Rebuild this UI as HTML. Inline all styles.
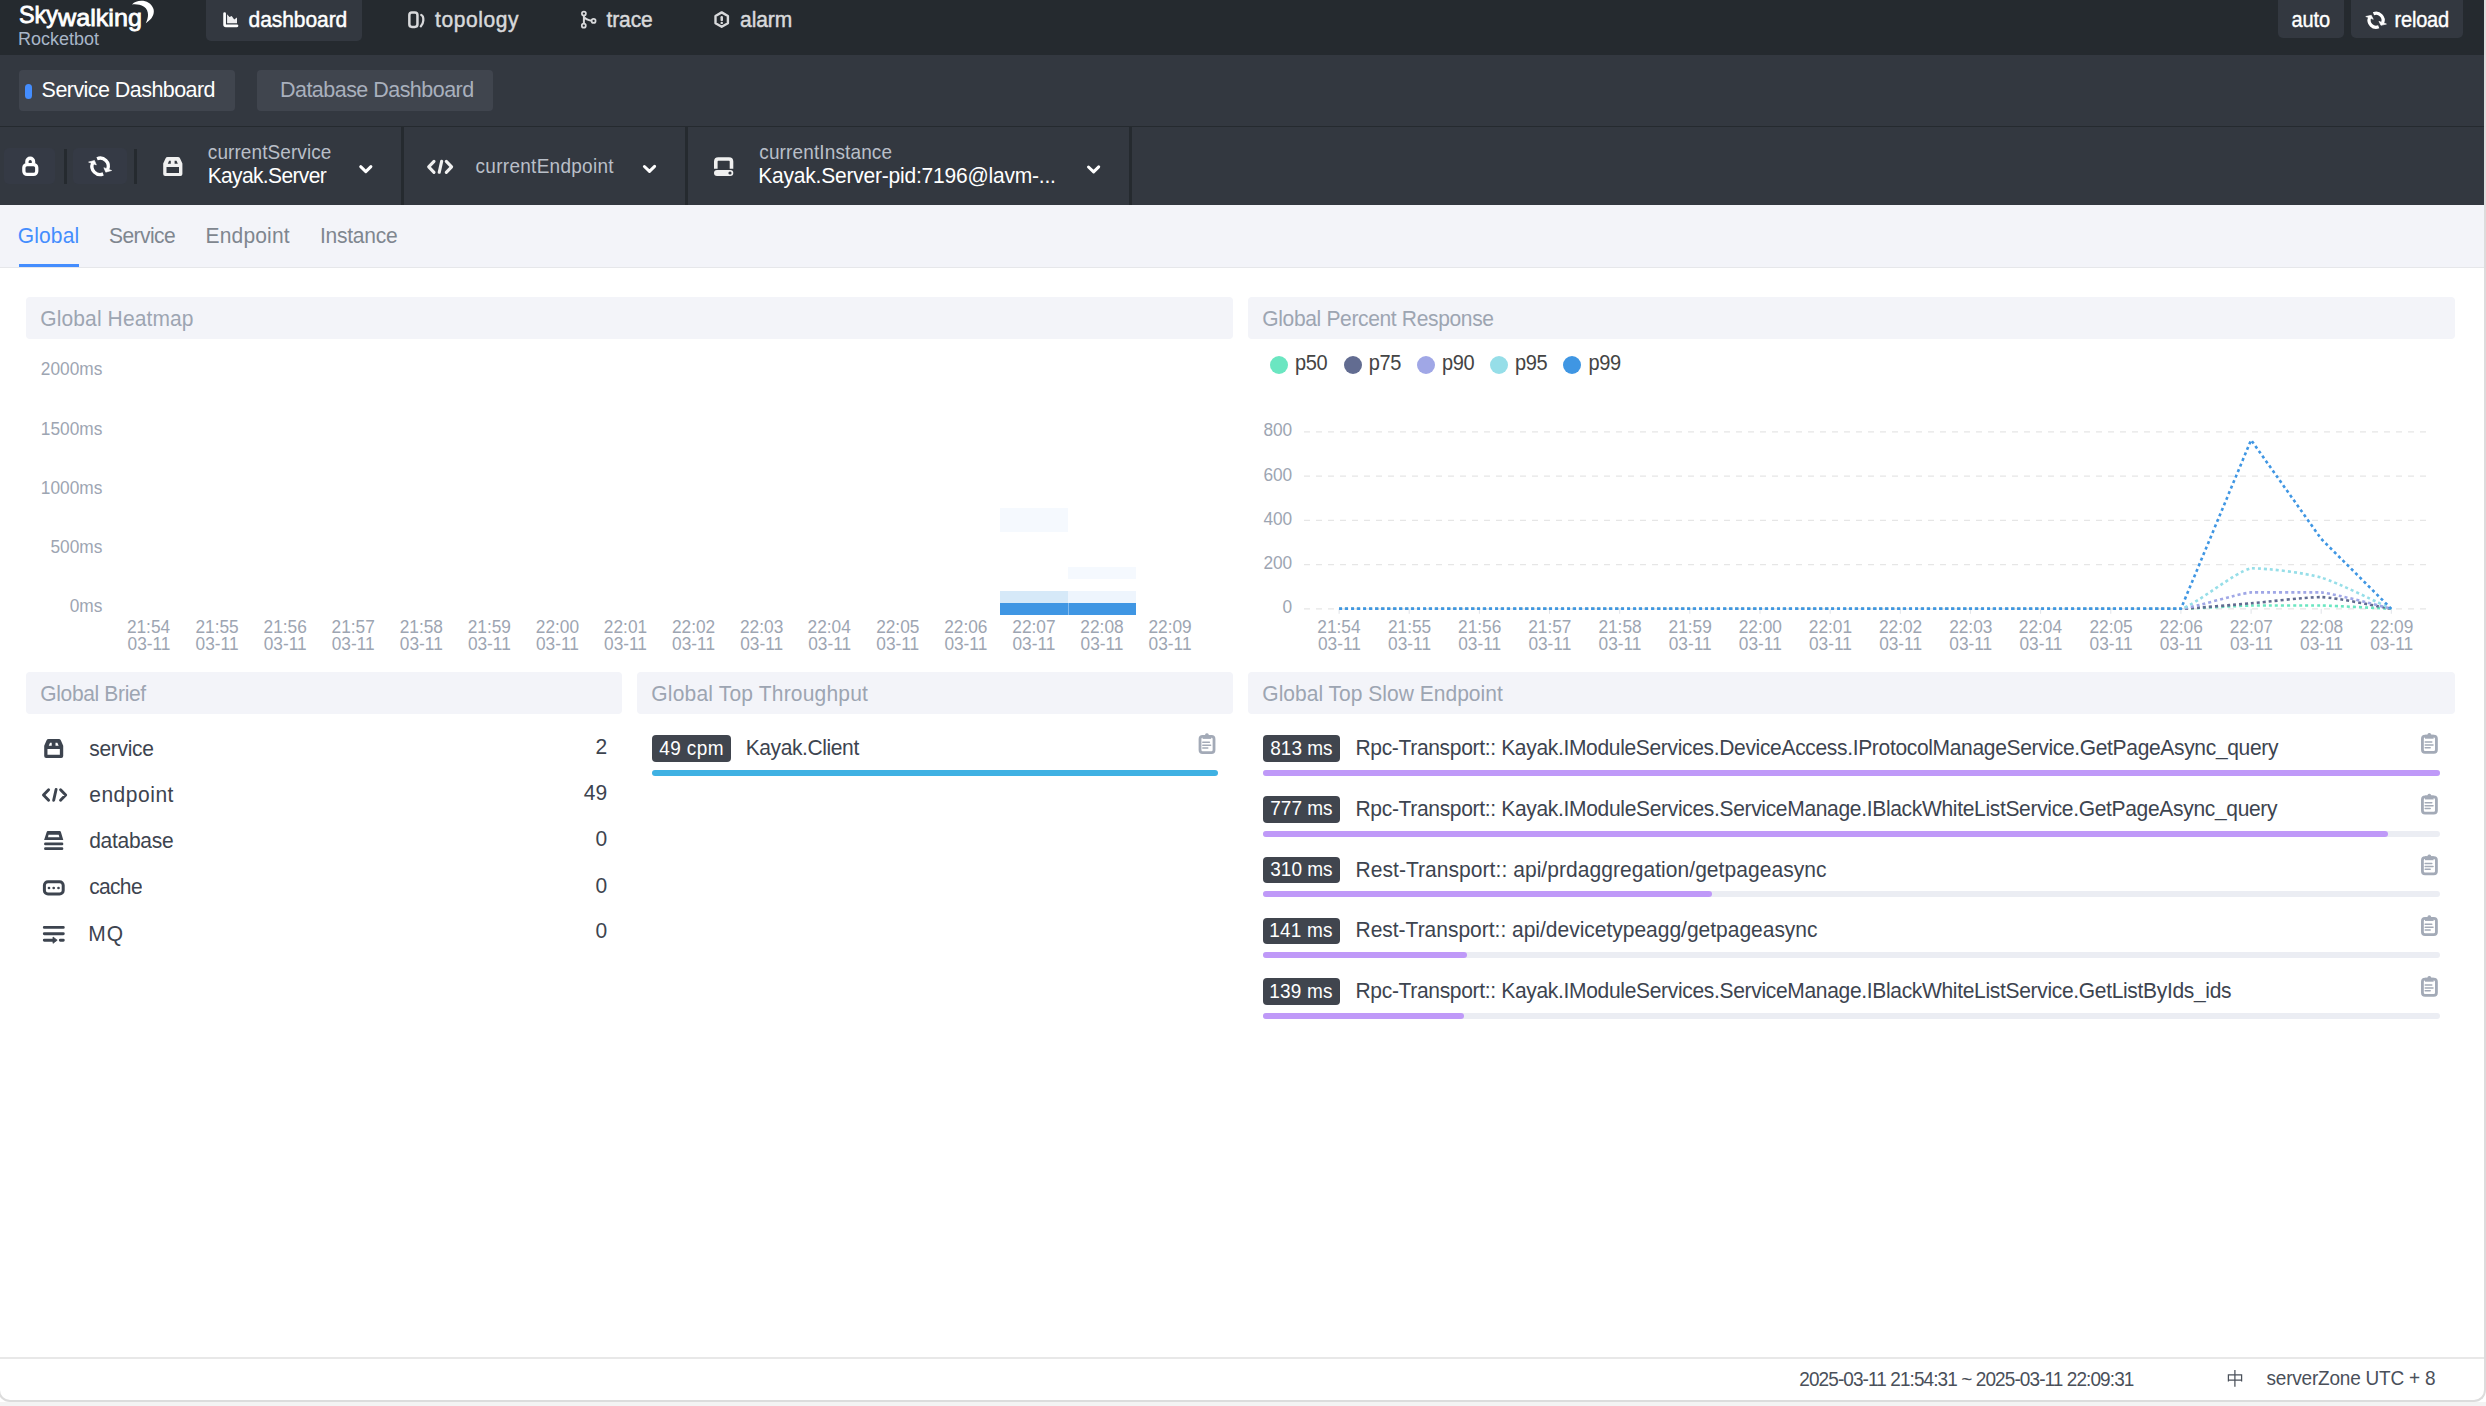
<!DOCTYPE html>
<html><head><meta charset="utf-8"><style>
html,body{margin:0;padding:0;width:2486px;height:1406px;overflow:hidden;background:#fff;font-family:"Liberation Sans", sans-serif;}
.t{position:absolute;white-space:nowrap;}
</style></head><body>
<div style="position:absolute;left:0px;top:0px;width:2486px;height:55px;background:#252a2f;"></div>
<div style="position:absolute;left:206px;top:-6px;width:156px;height:46.5px;background:#333840;border-radius:5px"></div>
<div style="position:absolute;left:2278px;top:-6px;width:66px;height:44px;background:#333840;border-radius:5px"></div>
<div style="position:absolute;left:2351px;top:-6px;width:112px;height:44px;background:#333840;border-radius:5px"></div>
<div style="position:absolute;left:0px;top:55px;width:2486px;height:71px;background:#333840;"></div>
<div style="position:absolute;left:19px;top:70px;width:215.5px;height:41px;background:#40454e;border-radius:4px"></div>
<div style="position:absolute;left:25px;top:84px;width:7px;height:15px;background:#448dfe;border-radius:4px"></div>
<div style="position:absolute;left:257px;top:70px;width:235.5px;height:41px;background:#40454e;border-radius:4px"></div>
<div style="position:absolute;left:0px;top:126px;width:2486px;height:1.5px;background:#252a2f;"></div>
<div style="position:absolute;left:0px;top:127px;width:2486px;height:78px;background:#333840;"></div>
<div style="position:absolute;left:3.7px;top:148.4px;width:51.2px;height:36.1px;background:#353a45;border-radius:5px"></div>
<div style="position:absolute;left:73.2px;top:148.4px;width:54.1px;height:36.1px;background:#353a45;border-radius:5px"></div>
<div style="position:absolute;left:64px;top:149px;width:3px;height:35px;background:#252a2f;"></div>
<div style="position:absolute;left:134px;top:149px;width:3px;height:35px;background:#252a2f;"></div>
<div style="position:absolute;left:401px;top:127px;width:3px;height:78px;background:#252a2f;"></div>
<div style="position:absolute;left:685px;top:127px;width:3px;height:78px;background:#252a2f;"></div>
<div style="position:absolute;left:1129px;top:127px;width:3px;height:78px;background:#252a2f;"></div>
<div style="position:absolute;left:0px;top:205px;width:2486px;height:62px;background:#f3f4f9;"></div>
<div style="position:absolute;left:0px;top:267px;width:2486px;height:1.3px;background:#e6e7ea;"></div>
<div style="position:absolute;left:18.5px;top:264px;width:60.5px;height:3px;background:#448dfe;"></div>
<div style="position:absolute;left:26px;top:297px;width:1207px;height:41.5px;background:#f3f4f9;border-radius:4px"></div>
<div style="position:absolute;left:1248px;top:297px;width:1207px;height:41.5px;background:#f3f4f9;border-radius:4px"></div>
<div style="position:absolute;left:26px;top:672px;width:596px;height:41.5px;background:#f3f4f9;border-radius:4px"></div>
<div style="position:absolute;left:637px;top:672px;width:596px;height:41.5px;background:#f3f4f9;border-radius:4px"></div>
<div style="position:absolute;left:1248px;top:672px;width:1207px;height:41.5px;background:#f3f4f9;border-radius:4px"></div>
<div style="position:absolute;left:999.58px;top:602.92px;width:68.07px;height:11.88px;background:#3f96e3;"></div>
<div style="position:absolute;left:1067.65px;top:602.92px;width:68.07px;height:11.88px;background:#3f96e3;"></div>
<div style="position:absolute;left:999.58px;top:591.04px;width:68.07px;height:11.88px;background:#d6e9f8;"></div>
<div style="position:absolute;left:1067.65px;top:591.04px;width:68.07px;height:11.88px;background:#eef5fd;"></div>
<div style="position:absolute;left:999.58px;top:507.88px;width:68.07px;height:23.76px;background:#f5f9fe;"></div>
<div style="position:absolute;left:1067.65px;top:567.28px;width:68.07px;height:11.88px;background:#f5f9fe;"></div>
<div style="position:absolute;left:1068px;top:603px;width:1px;height:11.8px;background:rgba(255,255,255,0.35);"></div>
<div style="position:absolute;left:1270px;top:356.3px;width:18px;height:18px;background:#6be6c1;border-radius:50%"></div>
<div style="position:absolute;left:1343.5px;top:356.3px;width:18px;height:18px;background:#626c91;border-radius:50%"></div>
<div style="position:absolute;left:1416.8px;top:356.3px;width:18px;height:18px;background:#a0a7e6;border-radius:50%"></div>
<div style="position:absolute;left:1490px;top:356.3px;width:18px;height:18px;background:#96dee8;border-radius:50%"></div>
<div style="position:absolute;left:1563px;top:356.3px;width:18px;height:18px;background:#3f96e3;border-radius:50%"></div>
<svg style="position:absolute;left:0;top:0" width="2486" height="1406" viewBox="0 0 2486 1406">
<line x1="1304" y1="431.8" x2="2427" y2="431.8" stroke="#e6e6e6" stroke-width="1.25" stroke-dasharray="6 6"/>
<line x1="1304" y1="476" x2="2427" y2="476" stroke="#e6e6e6" stroke-width="1.25" stroke-dasharray="6 6"/>
<line x1="1304" y1="520.3" x2="2427" y2="520.3" stroke="#e6e6e6" stroke-width="1.25" stroke-dasharray="6 6"/>
<line x1="1304" y1="564.5" x2="2427" y2="564.5" stroke="#e6e6e6" stroke-width="1.25" stroke-dasharray="6 6"/>
<line x1="1304" y1="608.8" x2="2427" y2="608.8" stroke="#e6e6e6" stroke-width="1.25" stroke-dasharray="6 6"/>
<line x1="1339.1" y1="608.8" x2="1339.1" y2="613.8" stroke="#e0e3e8" stroke-width="1"/>
<line x1="1409.2" y1="608.8" x2="1409.2" y2="613.8" stroke="#e0e3e8" stroke-width="1"/>
<line x1="1479.4" y1="608.8" x2="1479.4" y2="613.8" stroke="#e0e3e8" stroke-width="1"/>
<line x1="1549.5" y1="608.8" x2="1549.5" y2="613.8" stroke="#e0e3e8" stroke-width="1"/>
<line x1="1619.7" y1="608.8" x2="1619.7" y2="613.8" stroke="#e0e3e8" stroke-width="1"/>
<line x1="1689.8" y1="608.8" x2="1689.8" y2="613.8" stroke="#e0e3e8" stroke-width="1"/>
<line x1="1760.0" y1="608.8" x2="1760.0" y2="613.8" stroke="#e0e3e8" stroke-width="1"/>
<line x1="1830.2" y1="608.8" x2="1830.2" y2="613.8" stroke="#e0e3e8" stroke-width="1"/>
<line x1="1900.3" y1="608.8" x2="1900.3" y2="613.8" stroke="#e0e3e8" stroke-width="1"/>
<line x1="1970.4" y1="608.8" x2="1970.4" y2="613.8" stroke="#e0e3e8" stroke-width="1"/>
<line x1="2040.6" y1="608.8" x2="2040.6" y2="613.8" stroke="#e0e3e8" stroke-width="1"/>
<line x1="2110.8" y1="608.8" x2="2110.8" y2="613.8" stroke="#e0e3e8" stroke-width="1"/>
<line x1="2180.9" y1="608.8" x2="2180.9" y2="613.8" stroke="#e0e3e8" stroke-width="1"/>
<line x1="2251.1" y1="608.8" x2="2251.1" y2="613.8" stroke="#e0e3e8" stroke-width="1"/>
<line x1="2321.2" y1="608.8" x2="2321.2" y2="613.8" stroke="#e0e3e8" stroke-width="1"/>
<line x1="2391.3" y1="608.8" x2="2391.3" y2="613.8" stroke="#e0e3e8" stroke-width="1"/>
<path d="M1339.1 608.8 C1347.5 608.8 1392.4 608.8 1409.2 608.8 C1426.1 608.8 1462.6 608.8 1479.4 608.8 C1496.2 608.8 1532.7 608.8 1549.5 608.8 C1566.4 608.8 1602.9 608.8 1619.7 608.8 C1636.5 608.8 1673.0 608.8 1689.8 608.8 C1706.7 608.8 1743.2 608.8 1760.0 608.8 C1776.8 608.8 1813.3 608.8 1830.2 608.8 C1847.0 608.8 1883.5 608.8 1900.3 608.8 C1917.1 608.8 1953.6 608.8 1970.4 608.8 C1987.3 608.8 2023.8 608.8 2040.6 608.8 C2057.4 608.8 2093.9 608.8 2110.8 608.8 C2127.6 608.8 2164.1 608.8 2180.9 608.8 C2197.7 608.4 2234.2 605.9 2251.1 605.5 C2267.9 605.5 2304.4 605.5 2321.2 605.5 C2338.0 605.9 2382.9 608.4 2391.3 608.8" stroke="#6be6c1" stroke-width="2.6" fill="none" stroke-dasharray="3 3"/>
<path d="M1339.1 608.8 C1347.5 608.8 1392.4 608.8 1409.2 608.8 C1426.1 608.8 1462.6 608.8 1479.4 608.8 C1496.2 608.8 1532.7 608.8 1549.5 608.8 C1566.4 608.8 1602.9 608.8 1619.7 608.8 C1636.5 608.8 1673.0 608.8 1689.8 608.8 C1706.7 608.8 1743.2 608.8 1760.0 608.8 C1776.8 608.8 1813.3 608.8 1830.2 608.8 C1847.0 608.8 1883.5 608.8 1900.3 608.8 C1917.1 608.8 1953.6 608.8 1970.4 608.8 C1987.3 608.8 2023.8 608.8 2040.6 608.8 C2057.4 608.8 2093.9 608.8 2110.8 608.8 C2127.6 608.8 2164.1 608.8 2180.9 608.8 C2197.7 608.1 2234.2 604.7 2251.1 603.3 C2267.9 601.9 2304.4 597.1 2321.2 597.1 C2338.0 597.7 2382.9 607.4 2391.3 608.8" stroke="#626c91" stroke-width="2.6" fill="none" stroke-dasharray="3 3"/>
<path d="M1339.1 608.8 C1347.5 608.8 1392.4 608.8 1409.2 608.8 C1426.1 608.8 1462.6 608.8 1479.4 608.8 C1496.2 608.8 1532.7 608.8 1549.5 608.8 C1566.4 608.8 1602.9 608.8 1619.7 608.8 C1636.5 608.8 1673.0 608.8 1689.8 608.8 C1706.7 608.8 1743.2 608.8 1760.0 608.8 C1776.8 608.8 1813.3 608.8 1830.2 608.8 C1847.0 608.8 1883.5 608.8 1900.3 608.8 C1917.1 608.8 1953.6 608.8 1970.4 608.8 C1987.3 608.8 2023.8 608.8 2040.6 608.8 C2057.4 608.8 2093.9 608.8 2110.8 608.8 C2127.6 608.8 2164.1 608.8 2180.9 608.8 C2197.7 606.8 2234.2 594.4 2251.1 592.4 C2267.9 592.4 2304.4 592.4 2321.2 592.4 C2338.0 594.4 2382.9 606.8 2391.3 608.8" stroke="#a0a7e6" stroke-width="2.6" fill="none" stroke-dasharray="3 3"/>
<path d="M1339.1 608.8 C1347.5 608.8 1392.4 608.8 1409.2 608.8 C1426.1 608.8 1462.6 608.8 1479.4 608.8 C1496.2 608.8 1532.7 608.8 1549.5 608.8 C1566.4 608.8 1602.9 608.8 1619.7 608.8 C1636.5 608.8 1673.0 608.8 1689.8 608.8 C1706.7 608.8 1743.2 608.8 1760.0 608.8 C1776.8 608.8 1813.3 608.8 1830.2 608.8 C1847.0 608.8 1883.5 608.8 1900.3 608.8 C1917.1 608.8 1953.6 608.8 1970.4 608.8 C1987.3 608.8 2023.8 608.8 2040.6 608.8 C2057.4 608.8 2093.9 608.8 2110.8 608.8 C2127.6 608.8 2164.1 608.8 2180.9 608.8 C2197.7 603.9 2234.2 572.1 2251.1 568.3 C2267.9 568.3 2304.4 572.7 2321.2 577.6 C2338.0 582.5 2382.9 605.1 2391.3 608.8" stroke="#96dee8" stroke-width="2.6" fill="none" stroke-dasharray="3 3"/>
<path d="M1339.1 608.8 L1409.2 608.8 L1479.4 608.8 L1549.5 608.8 L1619.7 608.8 L1689.8 608.8 L1760.0 608.8 L1830.2 608.8 L1900.3 608.8 L1970.4 608.8 L2040.6 608.8 L2110.8 608.8 L2180.9 608.8 L2251.1 440.0 L2321.2 538.9 L2391.3 608.8" stroke="#3f96e3" stroke-width="2.6" fill="none" stroke-dasharray="3 3"/>
</svg>
<div style="position:absolute;left:652px;top:735.3px;width:79px;height:26.5px;background:#40454e;border-radius:4px"></div>
<div style="position:absolute;left:652px;top:770px;width:566px;height:6px;background:#3fb1e3;border-radius:3px"></div>
<div style="position:absolute;left:1263px;top:735.3px;width:77px;height:26.5px;background:#40454e;border-radius:4px"></div>
<div style="position:absolute;left:1263px;top:769.9px;width:1177px;height:6px;background:#ebedf3;border-radius:3px"></div>
<div style="position:absolute;left:1263px;top:769.9px;width:1177px;height:6px;background:#bf99f8;border-radius:3px"></div>
<div style="position:absolute;left:1263px;top:796.05px;width:77px;height:26.5px;background:#40454e;border-radius:4px"></div>
<div style="position:absolute;left:1263px;top:830.65px;width:1177px;height:6px;background:#ebedf3;border-radius:3px"></div>
<div style="position:absolute;left:1263px;top:830.65px;width:1125px;height:6px;background:#bf99f8;border-radius:3px"></div>
<div style="position:absolute;left:1263px;top:856.8px;width:77px;height:26.5px;background:#40454e;border-radius:4px"></div>
<div style="position:absolute;left:1263px;top:891.4px;width:1177px;height:6px;background:#ebedf3;border-radius:3px"></div>
<div style="position:absolute;left:1263px;top:891.4px;width:448.70000000000005px;height:6px;background:#bf99f8;border-radius:3px"></div>
<div style="position:absolute;left:1263px;top:917.55px;width:77px;height:26.5px;background:#40454e;border-radius:4px"></div>
<div style="position:absolute;left:1263px;top:952.15px;width:1177px;height:6px;background:#ebedf3;border-radius:3px"></div>
<div style="position:absolute;left:1263px;top:952.15px;width:203.5999999999999px;height:6px;background:#bf99f8;border-radius:3px"></div>
<div style="position:absolute;left:1263px;top:978.3px;width:77px;height:26.5px;background:#40454e;border-radius:4px"></div>
<div style="position:absolute;left:1263px;top:1012.9px;width:1177px;height:6px;background:#ebedf3;border-radius:3px"></div>
<div style="position:absolute;left:1263px;top:1012.9px;width:201px;height:6px;background:#bf99f8;border-radius:3px"></div>
<div style="position:absolute;left:0px;top:1357px;width:2486px;height:1.6px;background:#e8e8e8;"></div>
<div style="position:absolute;left:-2px;top:1000px;width:2488px;height:402px;border:2px solid #dcdcdc;border-top:none;border-radius:0 0 12px 12px;box-sizing:border-box"></div>
<div style="position:absolute;left:0px;top:1402px;width:2486px;height:4px;background:#f3f3f3;"></div>
<div style="position:absolute;left:2484px;top:0px;width:2px;height:1000px;background:#dcdcdc;"></div>
<svg style="position:absolute;left:0;top:0" width="2486" height="1406" viewBox="0 0 2486 1406">
<path d="M224.6 13.5 V24.5 Q224.6 25.8 225.9 25.8 H237" stroke="#fff" stroke-width="2.7" fill="none" stroke-linecap="round"/>
<path d="M227.1 14.3 L229.5 16.9 L231.7 16 L234.2 19.5 L237 17.6 V23.2 H227.1 Z" fill="#eeeef0"/>
<rect x="409.35" y="12.45" width="8.1" height="14.5" rx="2.6" stroke="#d8d9db" stroke-width="2.5" fill="none"/>
<path d="M421.3 15 Q423.6 16 423.3 20.5 Q423 24.5 420.8 26.3" stroke="#d8d9db" stroke-width="2.3" fill="none" stroke-linecap="round"/>
<path d="M583.9 15.6 V23.7 M584.6 17.6 Q586 19.6 591.6 20.7" stroke="#d8d9db" stroke-width="2" fill="none"/>
<circle cx="583.9" cy="13.6" r="2" stroke="#d8d9db" stroke-width="1.7" fill="none"/>
<circle cx="583.8" cy="25.7" r="2" stroke="#d8d9db" stroke-width="1.7" fill="none"/>
<circle cx="593.6" cy="20.9" r="2" stroke="#d8d9db" stroke-width="1.7" fill="none"/>
<path d="M721.7 12.4 L727.9 16 V23.2 L721.7 26.8 L715.5 23.2 V16 Z" stroke="#d8d9db" stroke-width="2.4" fill="none" stroke-linejoin="round"/>
<rect x="720.5" y="16" width="2.5" height="5.3" rx="1.2" fill="#d8d9db"/>
<rect x="720.5" y="22" width="2.5" height="1.9" rx="0.7" fill="#d8d9db"/>
<path d="M2373.48 13.81 A7.00 7.00 0 0 1 2382.59 22.92" stroke="#fff" stroke-width="3.2" fill="none"/>
<path d="M2378.92 21.33 L2386.44 24.06 L2380.96 25.34 Z" fill="#fff" stroke="#fff" stroke-width="0.6" stroke-linejoin="round"/>
<path d="M2378.72 26.79 A7.00 7.00 0 0 1 2369.61 17.68" stroke="#fff" stroke-width="3.2" fill="none"/>
<path d="M2373.28 19.27 L2365.76 16.54 L2371.24 15.26 Z" fill="#fff" stroke="#fff" stroke-width="0.6" stroke-linejoin="round"/>
<path d="M26.9 163.5 V161.5 A3.3 3.3 0 0 1 33.5 161.5 V163.5" stroke="#fff" stroke-width="3.4" fill="none"/>
<rect x="23.85" y="164.55" width="12.9" height="9.9" rx="3.2" stroke="#fff" stroke-width="3.3" fill="none"/>
<path d="M97.05 158.74 A8.15 8.15 0 0 1 107.66 169.35" stroke="#fff" stroke-width="3.3" fill="none"/>
<path d="M103.88 167.68 L111.63 170.50 L105.76 172.16 Z" fill="#fff" stroke="#fff" stroke-width="0.6" stroke-linejoin="round"/>
<path d="M103.15 173.86 A8.15 8.15 0 0 1 92.54 163.25" stroke="#fff" stroke-width="3.3" fill="none"/>
<path d="M96.32 164.92 L88.57 162.10 L94.44 160.44 Z" fill="#fff" stroke="#fff" stroke-width="0.6" stroke-linejoin="round"/>
<path d="M167.80 157.00 L177.80 157.00 Q179.50 157.00 180.10 158.40 L182.40 163.60 L182.40 174.10 Q182.40 176.10 180.40 176.10 L165.20 176.10 Q163.20 176.10 163.20 174.10 L163.20 163.60 L165.50 158.40 Q166.10 157.00 167.80 157.00 Z M166.50 167.00 L179.00 167.00 L179.00 172.90 L166.50 172.90 Z M167.80 163.70 L169.10 160.70 L170.80 160.70 L170.80 163.70 Z M174.60 160.70 L176.50 160.70 L177.80 163.70 L174.60 163.70 Z" fill="#f0f0f0" fill-rule="evenodd"/>
<path d="M434.00 161.40 L428.70 166.85 L434.00 172.30 M446.30 161.40 L451.60 166.85 L446.30 172.30 M441.70 161.20 L439.20 172.30" stroke="#f0f0f0" stroke-width="3.1" fill="none" stroke-linecap="round" stroke-linejoin="round"/>
<path d="M715.8 168.8 V161.5 Q715.8 159 718.3 159 H729 Q731.5 159 731.5 161.5 V168.8" stroke="#f0f0f0" stroke-width="3.6" fill="none"/>
<rect x="714" y="170" width="19.3" height="6.1" rx="3" fill="#f0f0f0"/>
<circle cx="730" cy="173" r="1.6" fill="#333840"/>
<path d="M360.70 166.70 L365.80 171.60 L370.90 166.60" stroke="#fff" stroke-width="3" fill="none" stroke-linecap="round" stroke-linejoin="round"/>
<path d="M644.40 166.50 L649.50 171.40 L654.60 166.40" stroke="#fff" stroke-width="3" fill="none" stroke-linecap="round" stroke-linejoin="round"/>
<path d="M1088.50 167.00 L1093.60 171.90 L1098.70 166.90" stroke="#fff" stroke-width="3" fill="none" stroke-linecap="round" stroke-linejoin="round"/>
<path d="M48.75 739.10 L58.65 739.10 Q60.34 739.10 60.93 740.49 L63.21 745.63 L63.21 756.03 Q63.21 758.01 61.23 758.01 L46.18 758.01 Q44.20 758.01 44.20 756.03 L44.20 745.63 L46.48 740.49 Q47.07 739.10 48.75 739.10 Z M47.47 749.00 L59.84 749.00 L59.84 754.84 L47.47 754.84 Z M48.75 745.73 L50.04 742.76 L51.72 742.76 L51.72 745.73 Z M55.49 742.76 L57.37 742.76 L58.65 745.73 L55.49 745.73 Z" fill="#3d444f" fill-rule="evenodd"/>
<path d="M48.61 789.70 L43.47 794.99 L48.61 800.27 M60.55 789.70 L65.69 794.99 L60.55 800.27 M56.08 789.51 L53.66 800.27" stroke="#3d444f" stroke-width="2.9" fill="none" stroke-linecap="round" stroke-linejoin="round"/>
<path d="M47.8 831.1 H59.8 Q60.6 831.1 60.9 832 L63.3 839.9 H44.1 L46.7 832 Q47 831.1 47.8 831.1 Z M48.5 834.8 L48 837.3 H59.4 L58.7 834.8 Z" fill="#3d444f" fill-rule="evenodd"/>
<path d="M45.4 843.9 H62 M45.4 848.7 H62" stroke="#3d444f" stroke-width="2.7" stroke-linecap="round"/>
<rect x="44.4" y="881.7" width="18.8" height="12.3" rx="3.6" stroke="#3d444f" stroke-width="3" fill="none"/>
<circle cx="49" cy="888" r="1.35" fill="#3d444f"/>
<circle cx="53.7" cy="888" r="1.35" fill="#3d444f"/>
<circle cx="58.5" cy="888" r="1.35" fill="#3d444f"/>
<path d="M44.3 927.4 H63.3 M44.3 933.7 H63.3 M44.3 940.2 H53.5 M60.3 940.2 H63.3" stroke="#3d444f" stroke-width="2.9" stroke-linecap="round"/>
<path d="M53 937 L57.2 940.2 L53 943.3 Z" fill="#3d444f" stroke="#3d444f" stroke-width="0.8" stroke-linejoin="round"/>
<path d="M132 4.5 C137 -1 150 -1 153.5 9 C155 15 151 20 145.8 23.2 C149 17 149 10 144 6.8 C140 4.5 136 4 132 4.5 Z" fill="#fff"/>
<rect x="1200.02" y="736.40" width="14" height="16.2" rx="2.6" stroke="#a3aab7" stroke-width="2.8" fill="none"/><path d="M1202.60 735.00 H1211.20 V738.90 H1202.60 Z" fill="#a3aab7"/><rect x="1205.10" y="733.20" width="3.6" height="3" rx="1.5" fill="#a3aab7"/><path d="M1202.80 742.30 H1209.40 M1202.80 745.20 H1210.60 M1202.80 747.90 H1207.80" stroke="#a3aab7" stroke-width="1.5" stroke-linecap="round"/>
<rect x="2422.42" y="736.20" width="14" height="16.2" rx="2.6" stroke="#a3aab7" stroke-width="2.8" fill="none"/><path d="M2425.00 734.80 H2433.60 V738.70 H2425.00 Z" fill="#a3aab7"/><rect x="2427.50" y="733.00" width="3.6" height="3" rx="1.5" fill="#a3aab7"/><path d="M2425.20 742.10 H2431.80 M2425.20 745.00 H2433.00 M2425.20 747.70 H2430.20" stroke="#a3aab7" stroke-width="1.5" stroke-linecap="round"/>
<rect x="2422.42" y="796.95" width="14" height="16.2" rx="2.6" stroke="#a3aab7" stroke-width="2.8" fill="none"/><path d="M2425.00 795.55 H2433.60 V799.45 H2425.00 Z" fill="#a3aab7"/><rect x="2427.50" y="793.75" width="3.6" height="3" rx="1.5" fill="#a3aab7"/><path d="M2425.20 802.85 H2431.80 M2425.20 805.75 H2433.00 M2425.20 808.45 H2430.20" stroke="#a3aab7" stroke-width="1.5" stroke-linecap="round"/>
<rect x="2422.42" y="857.70" width="14" height="16.2" rx="2.6" stroke="#a3aab7" stroke-width="2.8" fill="none"/><path d="M2425.00 856.30 H2433.60 V860.20 H2425.00 Z" fill="#a3aab7"/><rect x="2427.50" y="854.50" width="3.6" height="3" rx="1.5" fill="#a3aab7"/><path d="M2425.20 863.60 H2431.80 M2425.20 866.50 H2433.00 M2425.20 869.20 H2430.20" stroke="#a3aab7" stroke-width="1.5" stroke-linecap="round"/>
<rect x="2422.42" y="918.45" width="14" height="16.2" rx="2.6" stroke="#a3aab7" stroke-width="2.8" fill="none"/><path d="M2425.00 917.05 H2433.60 V920.95 H2425.00 Z" fill="#a3aab7"/><rect x="2427.50" y="915.25" width="3.6" height="3" rx="1.5" fill="#a3aab7"/><path d="M2425.20 924.35 H2431.80 M2425.20 927.25 H2433.00 M2425.20 929.95 H2430.20" stroke="#a3aab7" stroke-width="1.5" stroke-linecap="round"/>
<rect x="2422.42" y="979.20" width="14" height="16.2" rx="2.6" stroke="#a3aab7" stroke-width="2.8" fill="none"/><path d="M2425.00 977.80 H2433.60 V981.70 H2425.00 Z" fill="#a3aab7"/><rect x="2427.50" y="976.00" width="3.6" height="3" rx="1.5" fill="#a3aab7"/><path d="M2425.20 985.10 H2431.80 M2425.20 988.00 H2433.00 M2425.20 990.70 H2430.20" stroke="#a3aab7" stroke-width="1.5" stroke-linecap="round"/>
<path d="M2228.4 1381.6 V1374.8 H2241.6 V1381.6 M2228.4 1380.2 H2241.6 M2234.9 1370 V1386.7" stroke="#4a505a" stroke-width="1.25" fill="none"/>
</svg>
<div class="t" style="left:18.53px;top:3.20px;font-size:24px;line-height:24px;color:#ffffff;transform:scale(0.9742,1.0000);transform-origin:0 20.40px;-webkit-text-stroke:0.8px #fff;">Sky</div>
<div class="t" style="left:57.55px;top:6.00px;font-size:24px;line-height:24px;color:#ffffff;transform:scale(1.0478,1.0000);transform-origin:0 20.40px;-webkit-text-stroke:0.8px #fff;">walking</div>
<div class="t" style="left:18.00px;top:29.70px;font-size:18px;line-height:18px;color:#a8b6c8;letter-spacing:-0.005px;transform:scale(1.0000,1.0600);transform-origin:0 15.30px;">Rocketbot</div>
<div class="t" style="left:248.60px;top:9.15px;font-size:21px;line-height:21px;color:#ffffff;letter-spacing:-0.071px;transform:scale(1.0000,1.0600);transform-origin:0 17.85px;-webkit-text-stroke:0.45px #fff;">dashboard</div>
<div class="t" style="left:435.00px;top:9.15px;font-size:21px;line-height:21px;color:#d8d9db;letter-spacing:0.586px;transform:scale(1.0000,1.0600);transform-origin:0 17.85px;-webkit-text-stroke:0.45px #d8d9db;">topology</div>
<div class="t" style="left:606.60px;top:9.15px;font-size:21px;line-height:21px;color:#d8d9db;letter-spacing:-0.152px;transform:scale(1.0000,1.0600);transform-origin:0 17.85px;-webkit-text-stroke:0.45px #d8d9db;">trace</div>
<div class="t" style="left:740.00px;top:9.15px;font-size:21px;line-height:21px;color:#d8d9db;letter-spacing:-0.054px;transform:scale(1.0000,1.0600);transform-origin:0 17.85px;-webkit-text-stroke:0.45px #d8d9db;">alarm</div>
<div class="t" style="left:2291.50px;top:10.00px;font-size:20px;line-height:20px;color:#ffffff;letter-spacing:-0.101px;transform:scale(1.0000,1.0600);transform-origin:0 17.00px;-webkit-text-stroke:0.35px #fff;">auto</div>
<div class="t" style="left:2394.60px;top:10.00px;font-size:20px;line-height:20px;color:#ffffff;letter-spacing:-0.215px;transform:scale(1.0000,1.0600);transform-origin:0 17.00px;-webkit-text-stroke:0.35px #fff;">reload</div>
<div class="t" style="left:41.60px;top:79.72px;font-size:21.5px;line-height:21.5px;color:#ffffff;letter-spacing:-0.555px;transform:scale(1.0000,1.0600);transform-origin:0 18.27px;">Service Dashboard</div>
<div class="t" style="left:280.00px;top:79.72px;font-size:21.5px;line-height:21.5px;color:#a9b0bd;letter-spacing:-0.531px;transform:scale(1.0000,1.0600);transform-origin:0 18.27px;">Database Dashboard</div>
<div class="t" style="left:207.80px;top:142.65px;font-size:19px;line-height:19px;color:#b9bfc8;letter-spacing:0.083px;transform:scale(1.0000,1.0600);transform-origin:0 16.15px;">currentService</div>
<div class="t" style="left:207.70px;top:165.15px;font-size:21px;line-height:21px;color:#ffffff;letter-spacing:-0.642px;transform:scale(1.0000,1.0600);transform-origin:0 17.85px;">Kayak.Server</div>
<div class="t" style="left:475.60px;top:156.85px;font-size:19px;line-height:19px;color:#b9bfc8;letter-spacing:0.274px;transform:scale(1.0000,1.0600);transform-origin:0 16.15px;">currentEndpoint</div>
<div class="t" style="left:759.30px;top:143.05px;font-size:19px;line-height:19px;color:#b9bfc8;letter-spacing:0.129px;transform:scale(1.0000,1.0600);transform-origin:0 16.15px;">currentInstance</div>
<div class="t" style="left:758.30px;top:164.95px;font-size:21px;line-height:21px;color:#ffffff;letter-spacing:-0.215px;transform:scale(1.0000,1.0600);transform-origin:0 17.85px;">Kayak.Server-pid:7196@lavm-...</div>
<div class="t" style="left:17.70px;top:225.15px;font-size:21px;line-height:21px;color:#448dfe;letter-spacing:0.152px;transform:scale(1.0000,1.0600);transform-origin:0 17.85px;">Global</div>
<div class="t" style="left:109.00px;top:225.15px;font-size:21px;line-height:21px;color:#7f868f;letter-spacing:-0.557px;transform:scale(1.0000,1.0600);transform-origin:0 17.85px;">Service</div>
<div class="t" style="left:205.50px;top:225.15px;font-size:21px;line-height:21px;color:#7f868f;letter-spacing:0.176px;transform:scale(1.0000,1.0600);transform-origin:0 17.85px;">Endpoint</div>
<div class="t" style="left:320.00px;top:225.15px;font-size:21px;line-height:21px;color:#7f868f;letter-spacing:-0.244px;transform:scale(1.0000,1.0600);transform-origin:0 17.85px;">Instance</div>
<div class="t" style="left:40.30px;top:308.15px;font-size:21px;line-height:21px;color:#9da5b2;letter-spacing:0.110px;transform:scale(1.0000,1.0600);transform-origin:0 17.85px;">Global Heatmap</div>
<div class="t" style="left:1262.30px;top:308.15px;font-size:21px;line-height:21px;color:#9da5b2;letter-spacing:-0.347px;transform:scale(1.0000,1.0600);transform-origin:0 17.85px;">Global Percent Response</div>
<div class="t" style="left:40.30px;top:683.15px;font-size:21px;line-height:21px;color:#9da5b2;letter-spacing:-0.353px;transform:scale(1.0000,1.0600);transform-origin:0 17.85px;">Global Brief</div>
<div class="t" style="left:651.30px;top:683.15px;font-size:21px;line-height:21px;color:#9da5b2;letter-spacing:0.185px;transform:scale(1.0000,1.0600);transform-origin:0 17.85px;">Global Top Throughput</div>
<div class="t" style="left:1262.30px;top:683.15px;font-size:21px;line-height:21px;color:#9da5b2;letter-spacing:0.015px;transform:scale(1.0000,1.0600);transform-origin:0 17.85px;">Global Top Slow Endpoint</div>
<div class="t" style="left:40.86px;top:361.30px;font-size:17.3px;line-height:17.3px;color:#9da5b2;transform:scale(1.0000,1.0600);transform-origin:0 14.71px;">2000ms</div>
<div class="t" style="left:40.86px;top:420.55px;font-size:17.3px;line-height:17.3px;color:#9da5b2;transform:scale(1.0000,1.0600);transform-origin:0 14.71px;">1500ms</div>
<div class="t" style="left:40.86px;top:479.80px;font-size:17.3px;line-height:17.3px;color:#9da5b2;transform:scale(1.0000,1.0600);transform-origin:0 14.71px;">1000ms</div>
<div class="t" style="left:50.47px;top:539.04px;font-size:17.3px;line-height:17.3px;color:#9da5b2;transform:scale(1.0000,1.0600);transform-origin:0 14.71px;">500ms</div>
<div class="t" style="left:69.69px;top:598.29px;font-size:17.3px;line-height:17.3px;color:#9da5b2;transform:scale(1.0000,1.0600);transform-origin:0 14.71px;">0ms</div>
<div class="t" style="left:126.88px;top:618.69px;font-size:17.3px;line-height:17.3px;color:#9da5b2;transform:scale(1.0000,1.0600);transform-origin:0 14.71px;">21:54</div>
<div class="t" style="left:127.55px;top:635.59px;font-size:17.3px;line-height:17.3px;color:#9da5b2;transform:scale(1.0000,1.0600);transform-origin:0 14.71px;">03-11</div>
<div class="t" style="left:195.45px;top:618.69px;font-size:17.3px;line-height:17.3px;color:#9da5b2;transform:scale(1.0000,1.0600);transform-origin:0 14.71px;">21:55</div>
<div class="t" style="left:195.62px;top:635.59px;font-size:17.3px;line-height:17.3px;color:#9da5b2;transform:scale(1.0000,1.0600);transform-origin:0 14.71px;">03-11</div>
<div class="t" style="left:263.52px;top:618.69px;font-size:17.3px;line-height:17.3px;color:#9da5b2;transform:scale(1.0000,1.0600);transform-origin:0 14.71px;">21:56</div>
<div class="t" style="left:263.69px;top:635.59px;font-size:17.3px;line-height:17.3px;color:#9da5b2;transform:scale(1.0000,1.0600);transform-origin:0 14.71px;">03-11</div>
<div class="t" style="left:331.59px;top:618.69px;font-size:17.3px;line-height:17.3px;color:#9da5b2;transform:scale(1.0000,1.0600);transform-origin:0 14.71px;">21:57</div>
<div class="t" style="left:331.76px;top:635.59px;font-size:17.3px;line-height:17.3px;color:#9da5b2;transform:scale(1.0000,1.0600);transform-origin:0 14.71px;">03-11</div>
<div class="t" style="left:399.66px;top:618.69px;font-size:17.3px;line-height:17.3px;color:#9da5b2;transform:scale(1.0000,1.0600);transform-origin:0 14.71px;">21:58</div>
<div class="t" style="left:399.83px;top:635.59px;font-size:17.3px;line-height:17.3px;color:#9da5b2;transform:scale(1.0000,1.0600);transform-origin:0 14.71px;">03-11</div>
<div class="t" style="left:467.73px;top:618.69px;font-size:17.3px;line-height:17.3px;color:#9da5b2;transform:scale(1.0000,1.0600);transform-origin:0 14.71px;">21:59</div>
<div class="t" style="left:467.90px;top:635.59px;font-size:17.3px;line-height:17.3px;color:#9da5b2;transform:scale(1.0000,1.0600);transform-origin:0 14.71px;">03-11</div>
<div class="t" style="left:535.80px;top:618.69px;font-size:17.3px;line-height:17.3px;color:#9da5b2;transform:scale(1.0000,1.0600);transform-origin:0 14.71px;">22:00</div>
<div class="t" style="left:535.97px;top:635.59px;font-size:17.3px;line-height:17.3px;color:#9da5b2;transform:scale(1.0000,1.0600);transform-origin:0 14.71px;">03-11</div>
<div class="t" style="left:603.87px;top:618.69px;font-size:17.3px;line-height:17.3px;color:#9da5b2;transform:scale(1.0000,1.0600);transform-origin:0 14.71px;">22:01</div>
<div class="t" style="left:604.04px;top:635.59px;font-size:17.3px;line-height:17.3px;color:#9da5b2;transform:scale(1.0000,1.0600);transform-origin:0 14.71px;">03-11</div>
<div class="t" style="left:671.94px;top:618.69px;font-size:17.3px;line-height:17.3px;color:#9da5b2;transform:scale(1.0000,1.0600);transform-origin:0 14.71px;">22:02</div>
<div class="t" style="left:672.11px;top:635.59px;font-size:17.3px;line-height:17.3px;color:#9da5b2;transform:scale(1.0000,1.0600);transform-origin:0 14.71px;">03-11</div>
<div class="t" style="left:740.01px;top:618.69px;font-size:17.3px;line-height:17.3px;color:#9da5b2;transform:scale(1.0000,1.0600);transform-origin:0 14.71px;">22:03</div>
<div class="t" style="left:740.18px;top:635.59px;font-size:17.3px;line-height:17.3px;color:#9da5b2;transform:scale(1.0000,1.0600);transform-origin:0 14.71px;">03-11</div>
<div class="t" style="left:807.58px;top:618.69px;font-size:17.3px;line-height:17.3px;color:#9da5b2;transform:scale(1.0000,1.0600);transform-origin:0 14.71px;">22:04</div>
<div class="t" style="left:808.25px;top:635.59px;font-size:17.3px;line-height:17.3px;color:#9da5b2;transform:scale(1.0000,1.0600);transform-origin:0 14.71px;">03-11</div>
<div class="t" style="left:876.15px;top:618.69px;font-size:17.3px;line-height:17.3px;color:#9da5b2;transform:scale(1.0000,1.0600);transform-origin:0 14.71px;">22:05</div>
<div class="t" style="left:876.32px;top:635.59px;font-size:17.3px;line-height:17.3px;color:#9da5b2;transform:scale(1.0000,1.0600);transform-origin:0 14.71px;">03-11</div>
<div class="t" style="left:944.22px;top:618.69px;font-size:17.3px;line-height:17.3px;color:#9da5b2;transform:scale(1.0000,1.0600);transform-origin:0 14.71px;">22:06</div>
<div class="t" style="left:944.39px;top:635.59px;font-size:17.3px;line-height:17.3px;color:#9da5b2;transform:scale(1.0000,1.0600);transform-origin:0 14.71px;">03-11</div>
<div class="t" style="left:1012.29px;top:618.69px;font-size:17.3px;line-height:17.3px;color:#9da5b2;transform:scale(1.0000,1.0600);transform-origin:0 14.71px;">22:07</div>
<div class="t" style="left:1012.46px;top:635.59px;font-size:17.3px;line-height:17.3px;color:#9da5b2;transform:scale(1.0000,1.0600);transform-origin:0 14.71px;">03-11</div>
<div class="t" style="left:1080.36px;top:618.69px;font-size:17.3px;line-height:17.3px;color:#9da5b2;transform:scale(1.0000,1.0600);transform-origin:0 14.71px;">22:08</div>
<div class="t" style="left:1080.53px;top:635.59px;font-size:17.3px;line-height:17.3px;color:#9da5b2;transform:scale(1.0000,1.0600);transform-origin:0 14.71px;">03-11</div>
<div class="t" style="left:1148.43px;top:618.69px;font-size:17.3px;line-height:17.3px;color:#9da5b2;transform:scale(1.0000,1.0600);transform-origin:0 14.71px;">22:09</div>
<div class="t" style="left:1148.60px;top:635.59px;font-size:17.3px;line-height:17.3px;color:#9da5b2;transform:scale(1.0000,1.0600);transform-origin:0 14.71px;">03-11</div>
<div class="t" style="left:1295.00px;top:352.80px;font-size:20px;line-height:20px;color:#444444;letter-spacing:-0.373px;transform:scale(1.0000,1.0600);transform-origin:0 17.00px;">p50</div>
<div class="t" style="left:1368.70px;top:352.80px;font-size:20px;line-height:20px;color:#444444;letter-spacing:-0.373px;transform:scale(1.0000,1.0600);transform-origin:0 17.00px;">p75</div>
<div class="t" style="left:1442.00px;top:352.80px;font-size:20px;line-height:20px;color:#444444;letter-spacing:-0.373px;transform:scale(1.0000,1.0600);transform-origin:0 17.00px;">p90</div>
<div class="t" style="left:1515.00px;top:352.80px;font-size:20px;line-height:20px;color:#444444;letter-spacing:-0.373px;transform:scale(1.0000,1.0600);transform-origin:0 17.00px;">p95</div>
<div class="t" style="left:1588.50px;top:352.80px;font-size:20px;line-height:20px;color:#444444;letter-spacing:-0.373px;transform:scale(1.0000,1.0600);transform-origin:0 17.00px;">p99</div>
<div class="t" style="left:1263.38px;top:422.30px;font-size:17.3px;line-height:17.3px;color:#9da5b2;transform:scale(1.0000,1.0600);transform-origin:0 14.71px;">800</div>
<div class="t" style="left:1263.38px;top:466.50px;font-size:17.3px;line-height:17.3px;color:#9da5b2;transform:scale(1.0000,1.0600);transform-origin:0 14.71px;">600</div>
<div class="t" style="left:1263.38px;top:510.79px;font-size:17.3px;line-height:17.3px;color:#9da5b2;transform:scale(1.0000,1.0600);transform-origin:0 14.71px;">400</div>
<div class="t" style="left:1263.38px;top:554.99px;font-size:17.3px;line-height:17.3px;color:#9da5b2;transform:scale(1.0000,1.0600);transform-origin:0 14.71px;">200</div>
<div class="t" style="left:1282.60px;top:599.29px;font-size:17.3px;line-height:17.3px;color:#9da5b2;transform:scale(1.0000,1.0600);transform-origin:0 14.71px;">0</div>
<div class="t" style="left:1317.28px;top:618.69px;font-size:17.3px;line-height:17.3px;color:#9da5b2;transform:scale(1.0000,1.0600);transform-origin:0 14.71px;">21:54</div>
<div class="t" style="left:1317.95px;top:635.59px;font-size:17.3px;line-height:17.3px;color:#9da5b2;transform:scale(1.0000,1.0600);transform-origin:0 14.71px;">03-11</div>
<div class="t" style="left:1387.93px;top:618.69px;font-size:17.3px;line-height:17.3px;color:#9da5b2;transform:scale(1.0000,1.0600);transform-origin:0 14.71px;">21:55</div>
<div class="t" style="left:1388.10px;top:635.59px;font-size:17.3px;line-height:17.3px;color:#9da5b2;transform:scale(1.0000,1.0600);transform-origin:0 14.71px;">03-11</div>
<div class="t" style="left:1458.08px;top:618.69px;font-size:17.3px;line-height:17.3px;color:#9da5b2;transform:scale(1.0000,1.0600);transform-origin:0 14.71px;">21:56</div>
<div class="t" style="left:1458.25px;top:635.59px;font-size:17.3px;line-height:17.3px;color:#9da5b2;transform:scale(1.0000,1.0600);transform-origin:0 14.71px;">03-11</div>
<div class="t" style="left:1528.23px;top:618.69px;font-size:17.3px;line-height:17.3px;color:#9da5b2;transform:scale(1.0000,1.0600);transform-origin:0 14.71px;">21:57</div>
<div class="t" style="left:1528.40px;top:635.59px;font-size:17.3px;line-height:17.3px;color:#9da5b2;transform:scale(1.0000,1.0600);transform-origin:0 14.71px;">03-11</div>
<div class="t" style="left:1598.38px;top:618.69px;font-size:17.3px;line-height:17.3px;color:#9da5b2;transform:scale(1.0000,1.0600);transform-origin:0 14.71px;">21:58</div>
<div class="t" style="left:1598.55px;top:635.59px;font-size:17.3px;line-height:17.3px;color:#9da5b2;transform:scale(1.0000,1.0600);transform-origin:0 14.71px;">03-11</div>
<div class="t" style="left:1668.53px;top:618.69px;font-size:17.3px;line-height:17.3px;color:#9da5b2;transform:scale(1.0000,1.0600);transform-origin:0 14.71px;">21:59</div>
<div class="t" style="left:1668.70px;top:635.59px;font-size:17.3px;line-height:17.3px;color:#9da5b2;transform:scale(1.0000,1.0600);transform-origin:0 14.71px;">03-11</div>
<div class="t" style="left:1738.68px;top:618.69px;font-size:17.3px;line-height:17.3px;color:#9da5b2;transform:scale(1.0000,1.0600);transform-origin:0 14.71px;">22:00</div>
<div class="t" style="left:1738.85px;top:635.59px;font-size:17.3px;line-height:17.3px;color:#9da5b2;transform:scale(1.0000,1.0600);transform-origin:0 14.71px;">03-11</div>
<div class="t" style="left:1808.83px;top:618.69px;font-size:17.3px;line-height:17.3px;color:#9da5b2;transform:scale(1.0000,1.0600);transform-origin:0 14.71px;">22:01</div>
<div class="t" style="left:1809.00px;top:635.59px;font-size:17.3px;line-height:17.3px;color:#9da5b2;transform:scale(1.0000,1.0600);transform-origin:0 14.71px;">03-11</div>
<div class="t" style="left:1878.98px;top:618.69px;font-size:17.3px;line-height:17.3px;color:#9da5b2;transform:scale(1.0000,1.0600);transform-origin:0 14.71px;">22:02</div>
<div class="t" style="left:1879.15px;top:635.59px;font-size:17.3px;line-height:17.3px;color:#9da5b2;transform:scale(1.0000,1.0600);transform-origin:0 14.71px;">03-11</div>
<div class="t" style="left:1949.13px;top:618.69px;font-size:17.3px;line-height:17.3px;color:#9da5b2;transform:scale(1.0000,1.0600);transform-origin:0 14.71px;">22:03</div>
<div class="t" style="left:1949.30px;top:635.59px;font-size:17.3px;line-height:17.3px;color:#9da5b2;transform:scale(1.0000,1.0600);transform-origin:0 14.71px;">03-11</div>
<div class="t" style="left:2018.78px;top:618.69px;font-size:17.3px;line-height:17.3px;color:#9da5b2;transform:scale(1.0000,1.0600);transform-origin:0 14.71px;">22:04</div>
<div class="t" style="left:2019.45px;top:635.59px;font-size:17.3px;line-height:17.3px;color:#9da5b2;transform:scale(1.0000,1.0600);transform-origin:0 14.71px;">03-11</div>
<div class="t" style="left:2089.43px;top:618.69px;font-size:17.3px;line-height:17.3px;color:#9da5b2;transform:scale(1.0000,1.0600);transform-origin:0 14.71px;">22:05</div>
<div class="t" style="left:2089.60px;top:635.59px;font-size:17.3px;line-height:17.3px;color:#9da5b2;transform:scale(1.0000,1.0600);transform-origin:0 14.71px;">03-11</div>
<div class="t" style="left:2159.58px;top:618.69px;font-size:17.3px;line-height:17.3px;color:#9da5b2;transform:scale(1.0000,1.0600);transform-origin:0 14.71px;">22:06</div>
<div class="t" style="left:2159.75px;top:635.59px;font-size:17.3px;line-height:17.3px;color:#9da5b2;transform:scale(1.0000,1.0600);transform-origin:0 14.71px;">03-11</div>
<div class="t" style="left:2229.73px;top:618.69px;font-size:17.3px;line-height:17.3px;color:#9da5b2;transform:scale(1.0000,1.0600);transform-origin:0 14.71px;">22:07</div>
<div class="t" style="left:2229.90px;top:635.59px;font-size:17.3px;line-height:17.3px;color:#9da5b2;transform:scale(1.0000,1.0600);transform-origin:0 14.71px;">03-11</div>
<div class="t" style="left:2299.88px;top:618.69px;font-size:17.3px;line-height:17.3px;color:#9da5b2;transform:scale(1.0000,1.0600);transform-origin:0 14.71px;">22:08</div>
<div class="t" style="left:2300.05px;top:635.59px;font-size:17.3px;line-height:17.3px;color:#9da5b2;transform:scale(1.0000,1.0600);transform-origin:0 14.71px;">03-11</div>
<div class="t" style="left:2370.03px;top:618.69px;font-size:17.3px;line-height:17.3px;color:#9da5b2;transform:scale(1.0000,1.0600);transform-origin:0 14.71px;">22:09</div>
<div class="t" style="left:2370.20px;top:635.59px;font-size:17.3px;line-height:17.3px;color:#9da5b2;transform:scale(1.0000,1.0600);transform-origin:0 14.71px;">03-11</div>
<div class="t" style="left:89.20px;top:738.15px;font-size:21px;line-height:21px;color:#3d444f;letter-spacing:-0.290px;transform:scale(1.0000,1.0600);transform-origin:0 17.85px;">service</div>
<div class="t" style="left:595.40px;top:735.75px;font-size:21px;line-height:21px;color:#3d444f;transform:scale(1.0000,1.0600);transform-origin:0 17.85px;">2</div>
<div class="t" style="left:89.20px;top:783.95px;font-size:21px;line-height:21px;color:#3d444f;letter-spacing:0.523px;transform:scale(1.0000,1.0600);transform-origin:0 17.85px;">endpoint</div>
<div class="t" style="left:583.72px;top:781.85px;font-size:21px;line-height:21px;color:#3d444f;transform:scale(1.0000,1.0600);transform-origin:0 17.85px;">49</div>
<div class="t" style="left:89.20px;top:830.15px;font-size:21px;line-height:21px;color:#3d444f;letter-spacing:-0.276px;transform:scale(1.0000,1.0600);transform-origin:0 17.85px;">database</div>
<div class="t" style="left:595.40px;top:827.55px;font-size:21px;line-height:21px;color:#3d444f;transform:scale(1.0000,1.0600);transform-origin:0 17.85px;">0</div>
<div class="t" style="left:89.20px;top:876.45px;font-size:21px;line-height:21px;color:#3d444f;letter-spacing:-0.665px;transform:scale(1.0000,1.0600);transform-origin:0 17.85px;">cache</div>
<div class="t" style="left:595.40px;top:874.65px;font-size:21px;line-height:21px;color:#3d444f;transform:scale(1.0000,1.0600);transform-origin:0 17.85px;">0</div>
<div class="t" style="left:88.20px;top:922.85px;font-size:21px;line-height:21px;color:#3d444f;letter-spacing:1.007px;transform:scale(1.0000,1.0600);transform-origin:0 17.85px;">MQ</div>
<div class="t" style="left:595.40px;top:920.15px;font-size:21px;line-height:21px;color:#3d444f;transform:scale(1.0000,1.0600);transform-origin:0 17.85px;">0</div>
<div class="t" style="left:659.30px;top:738.55px;font-size:19px;line-height:19px;color:#ffffff;letter-spacing:0.384px;transform:scale(1.0000,1.0600);transform-origin:0 16.15px;">49 cpm</div>
<div class="t" style="left:745.70px;top:736.95px;font-size:21px;line-height:21px;color:#3d444f;letter-spacing:-0.396px;transform:scale(1.0000,1.0600);transform-origin:0 17.85px;">Kayak.Client</div>
<div class="t" style="left:1270.30px;top:738.55px;font-size:19px;line-height:19px;color:#ffffff;letter-spacing:-0.021px;transform:scale(1.0000,1.0600);transform-origin:0 16.15px;">813 ms</div>
<div class="t" style="left:1355.50px;top:737.05px;font-size:21px;line-height:21px;color:#3d444f;letter-spacing:-0.328px;transform:scale(1.0000,1.0600);transform-origin:0 17.85px;">Rpc-Transport:: Kayak.IModuleServices.DeviceAccess.IProtocolManageService.GetPageAsync_query</div>
<div class="t" style="left:1270.30px;top:799.30px;font-size:19px;line-height:19px;color:#ffffff;letter-spacing:-0.021px;transform:scale(1.0000,1.0600);transform-origin:0 16.15px;">777 ms</div>
<div class="t" style="left:1355.50px;top:797.80px;font-size:21px;line-height:21px;color:#3d444f;letter-spacing:-0.322px;transform:scale(1.0000,1.0600);transform-origin:0 17.85px;">Rpc-Transport:: Kayak.IModuleServices.ServiceManage.IBlackWhiteListService.GetPageAsync_query</div>
<div class="t" style="left:1270.30px;top:860.05px;font-size:19px;line-height:19px;color:#ffffff;letter-spacing:-0.021px;transform:scale(1.0000,1.0600);transform-origin:0 16.15px;">310 ms</div>
<div class="t" style="left:1355.50px;top:858.55px;font-size:21px;line-height:21px;color:#3d444f;letter-spacing:0.053px;transform:scale(1.0000,1.0600);transform-origin:0 17.85px;">Rest-Transport:: api/prdaggregation/getpageasync</div>
<div class="t" style="left:1269.30px;top:920.80px;font-size:19px;line-height:19px;color:#ffffff;letter-spacing:0.179px;transform:scale(1.0000,1.0600);transform-origin:0 16.15px;">141 ms</div>
<div class="t" style="left:1355.50px;top:919.30px;font-size:21px;line-height:21px;color:#3d444f;letter-spacing:-0.014px;transform:scale(1.0000,1.0600);transform-origin:0 17.85px;">Rest-Transport:: api/devicetypeagg/getpageasync</div>
<div class="t" style="left:1269.30px;top:981.55px;font-size:19px;line-height:19px;color:#ffffff;letter-spacing:0.179px;transform:scale(1.0000,1.0600);transform-origin:0 16.15px;">139 ms</div>
<div class="t" style="left:1355.50px;top:980.05px;font-size:21px;line-height:21px;color:#3d444f;letter-spacing:-0.321px;transform:scale(1.0000,1.0600);transform-origin:0 17.85px;">Rpc-Transport:: Kayak.IModuleServices.ServiceManage.IBlackWhiteListService.GetListByIds_ids</div>
<div class="t" style="left:1799.30px;top:1369.65px;font-size:19px;line-height:19px;color:#4a505a;letter-spacing:-0.916px;transform:scale(1.0000,1.0600);transform-origin:0 16.15px;">2025-03-11 21:54:31 ~ 2025-03-11 22:09:31</div>
<div class="t" style="left:2266.50px;top:1368.75px;font-size:19px;line-height:19px;color:#4a505a;letter-spacing:-0.210px;transform:scale(1.0000,1.0600);transform-origin:0 16.15px;">serverZone UTC + 8</div>
</body></html>
